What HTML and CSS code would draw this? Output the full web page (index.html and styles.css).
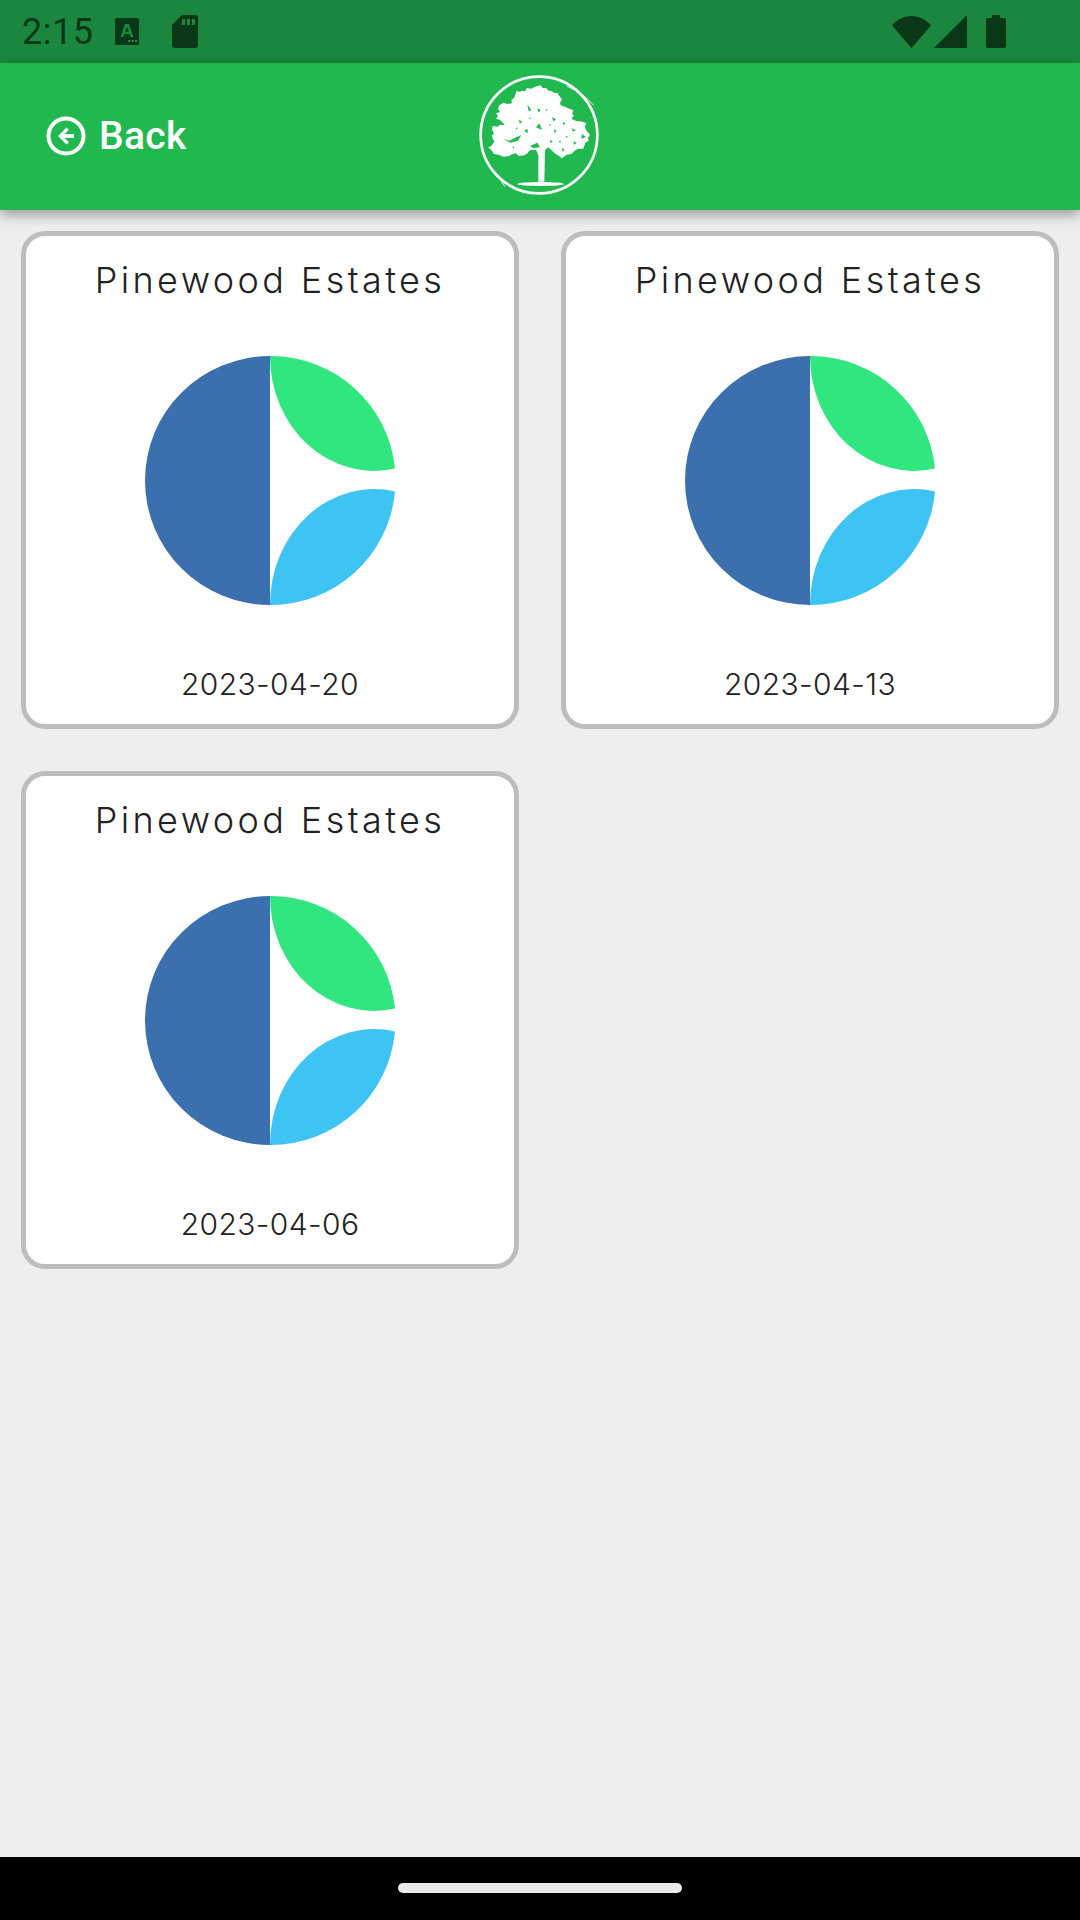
FILE: index.html
```html
<!DOCTYPE html>
<html lang="en">
<head>
<meta charset="utf-8">
<title>Pinewood Estates</title>
<link rel="stylesheet" href="styles.css">
</head>
<body>
<svg class="defs" width="0" height="0" aria-hidden="true">
  <defs>
    <symbol id="pie" viewBox="0 0 250 250" preserveAspectRatio="none">
      <path fill="#3b6fae" d="M125 0A125 125 0 0 0 125 250Z"/>
      <path fill="#31e67f" d="M125 0A125 125 0 0 1 250 113A104 115 0 0 1 125 0Z"/>
      <path fill="#3ec4f3" d="M125 250A125 125 0 0 0 250 136A104 116 0 0 0 125 250Z"/>
    </symbol>
  </defs>
</svg>
<div class="app">
  <div class="status">
    <div class="status-left">
      <span class="time">2:15</span>
      <svg class="ic-a" viewBox="0 0 24 27"><path fill="#0a3716" d="M1.5 0h21A1.5 1.5 0 0 1 24 1.5v24a1.5 1.5 0 0 1-1.5 1.5h-21A1.500 1.500 0 0 1 0 25.500v-24A1.500 1.500 0 0 1 1.500 0Z"/><path fill="#1a863e" d="M10 6h4l4.500 13h-3l-.9-3H9.400l-.9 3h-3Zm2 3-1.800 4.800h3.600Z"/><path fill="#1a863e" d="M13 22h2.500v2H13Zm3.500 0H19v2h-2.500Zm3.500 0h2.500v2H20Z"/></svg>
      <svg class="ic-sd" viewBox="0 0 26 33"><path fill="#0a3716" d="M10 0h13a3 3 0 0 1 3 3v27a3 3 0 0 1-3 3H3a3 3 0 0 1-3-3V10Z"/><path fill="#1a863e" d="M10 4h3v6h-3Zm5 0h3v6h-3Zm5 0h3v6h-3Z"/></svg>
    </div>
    <div class="status-right">
      <svg class="ic-wifi" viewBox="0 0 39 32"><path fill="#0a3716" d="M0 9.500C5 3.500 12 0 19.500 0S34 3.500 39 9.500L19.500 32Z"/></svg>
      <svg class="ic-signal" viewBox="0 0 33 33"><path fill="#0a3716" d="M33 0v33H0Z"/></svg>
      <svg class="ic-bat" viewBox="0 0 20 33"><path fill="#0a3716" d="M6 0h8v3h4a2 2 0 0 1 2 2v26a2 2 0 0 1-2 2H2a2 2 0 0 1-2-2V5a2 2 0 0 1 2-2h4Z"/></svg>
    </div>
  </div>
  <header class="topbar">
    <div class="back">
      <svg class="back-icon" viewBox="0 0 40 40"><circle cx="20" cy="20" r="17.500" fill="none" stroke="#fff" stroke-width="4"/><path fill="#fff" d="M20.500 11.500l2.300 2.300-4.200 4.200h9.400v4h-9.400l4.200 4.200-2.300 2.300L12 20Z"/></svg>
      <span class="back-label">Back</span>
    </div>
    <svg class="logo" viewBox="0 0 540 450">
      <circle cx="267" cy="225" r="175" fill="none" stroke="#fff" stroke-width="8"/>
      <path fill="none" stroke="#fff" stroke-width="2.500" d="M350 78Q400 100 430 135M140 340Q150 360 165 380"/>
      <path fill="#fff" d="M115 262L124 258 128 252 134 244 128 238 126 226 132 222 126 208 128 198 142 200 150 194 165 196 156 186 150 180 138 176 144 168 138 160 150 156 144 146 148 136 160 128 172 132 186 130 184 120 192 114 196 104 200 92 208 96 216 92 226 94 230 84 244 86 255 80 272 76 278 84 288 84 296 92 306 94 314 100 322 98 328 108 336 118 330 128 332 136 348 142 358 146 370 150 366 162 372 166 364 176 380 184 392 184 410 190 404 198 408 210 420 224 414 234 416 242 406 248 400 266 384 266 374 272 364 282 350 284 336 295 324 286 314 280 304 270 295 262 285 270 283 365 265 365 265 285 258 270 240 270 232 280 224 286 206 288 198 280 188 282 176 288 160 290 146 284 132 282 124 270Z"/>
      <ellipse cx="272" cy="372" rx="70" ry="6" fill="#fff"/>
      <g fill="#21b84f">
        <path d="M160 236L178 242 198 232 214 226 204 242 180 248Z"/>
        <path d="M232 134L244 150 236 154Z"/>
        <path d="M262 144L272 150 266 158Z"/>
        <path d="M306 172L318 178 310 184Z"/>
        <path d="M338 186L346 190 340 196Z"/>
        <path d="M366 204L378 212 368 214Z"/>
        <path d="M396 222L408 232 394 236Z"/>
        <path d="M240 258L262 248 270 262 250 264Z"/>
        <path d="M258 202L268 190 276 210Z"/>
        <path d="M206 180L216 184 210 192Z"/>
        <path d="M336 264L344 268 338 276Z"/>
        <path d="M222 212L232 206 234 220Z"/>
        <path d="M312 208L320 212 314 220Z"/>
        <path d="M300 240L308 244 302 250Z"/>
        <path d="M370 244L380 248 372 254Z"/>
      </g>
      <g fill="#21b84f">
        <circle cx="290" cy="150" r="2.500"/><circle cx="240" cy="175" r="2.500"/>
        <circle cx="350" cy="230" r="2.500"/><circle cx="200" cy="205" r="2.500"/>
        <circle cx="330" cy="245" r="2.500"/><circle cx="190" cy="262" r="2.500"/>
        <circle cx="300" cy="195" r="2.500"/>
      </g>
    </svg>
    <div class="spacer"></div>
  </header>
  <main class="grid">
    <article class="card">
      <h2 class="card-title">Pinewood Estates</h2>
      <svg class="pie"><use href="#pie"/></svg>
      <p class="card-date">2023-04-20</p>
    </article>
    <article class="card">
      <h2 class="card-title">Pinewood Estates</h2>
      <svg class="pie"><use href="#pie"/></svg>
      <p class="card-date">2023-04-13</p>
    </article>
    <article class="card">
      <h2 class="card-title">Pinewood Estates</h2>
      <svg class="pie"><use href="#pie"/></svg>
      <p class="card-date">2023-04-06</p>
    </article>
  </main>
  <footer class="navbar"><div class="pill"></div></footer>
</div>
</body>
</html>
```
FILE: styles.css
```css
* { box-sizing: border-box; }
html, body { margin: 0; padding: 0; }
body { width: 1080px; height: 1920px; overflow: hidden; background: #eeeeee; font-family: Roboto, sans-serif; }
.defs { display: block; height: 0; }
.app { width: 1080px; height: 1920px; display: flex; flex-direction: column; }

.status { height: 63px; flex: none; background: #1a863e; display: flex; align-items: center; justify-content: space-between; padding: 0 74px 0 22px; }
.status-left { display: flex; align-items: center; }
.status-right { display: flex; align-items: center; gap: 3px; }
.time { font-size: 36px; color: #0a3716; width: 93px; letter-spacing: 0.5px; }
.ic-a { width: 24px; height: 27px; }
.ic-sd { width: 26px; height: 33px; margin-left: 33px; }
.ic-wifi { width: 39px; height: 32px; }
.ic-signal { width: 33px; height: 33px; }
.ic-bat { width: 20px; height: 33px; margin-left: 16px; }

.topbar { height: 147px; flex: none; background: #21b84f; display: grid; grid-template-columns: 1fr 180px 1fr; grid-template-rows: 147px; align-items: center; box-shadow: 0 5px 12px rgba(0,0,0,0.35); position: relative; }
.back { display: flex; align-items: center; padding: 0 0 1px 46px; gap: 14px; }
.back-icon { width: 40px; height: 40px; }
.back-label { font-size: 39px; font-weight: 500; letter-spacing: 0.3px; color: #fff; margin-left: -1px; }
.logo { width: 180px; height: 150px; display: block; align-self: start; margin-top: -3px; }

.grid { flex: 1; display: grid; grid-template-columns: 498px 498px; grid-auto-rows: 498px; gap: 42px 42px; padding: 21px 21px; align-content: start; }
.card { background: #fff; border: 5px solid #bdbdbd; border-radius: 24px; display: flex; flex-direction: column; align-items: center; padding-top: 20px; }
.card-title { margin: 0; font-family: Inter, sans-serif; font-weight: 300; font-size: 36px; line-height: 48px; letter-spacing: 3.4px; color: #222; }
.pie { width: 250px; height: 249px; margin-top: 52px; display: block; }
.card-date { margin: 59px 0 0; font-family: Inter, sans-serif; font-weight: 300; font-size: 30px; line-height: 40px; letter-spacing: 0.4px; color: #222; }

.navbar { height: 63px; flex: none; background: #000; display: flex; justify-content: center; padding-top: 26px; }
.pill { width: 284px; height: 10px; border-radius: 5px; background: #eaeaea; }
```
